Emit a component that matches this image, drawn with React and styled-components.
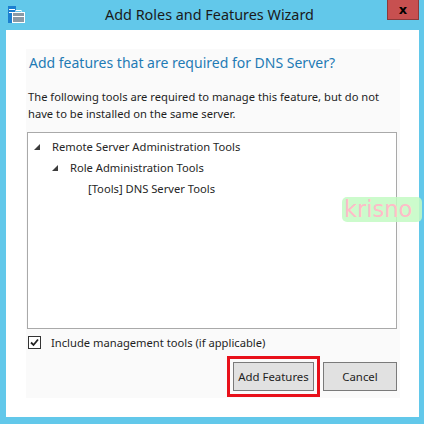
import React from "react";
import styled, { createGlobalStyle } from "styled-components";

const GlobalStyle = createGlobalStyle`
  html, body {
    margin: 0;
    padding: 0;
    background: #62c8ea;
  }
  * {
    box-sizing: border-box;
  }
`;

const Frame = styled.div`
  position: relative;
  width: 424px;
  height: 424px;
  background: #62c8ea;
  display: flex;
  flex-direction: column;
  padding: 0 5px 7px 6px;
  overflow: hidden;
  font-family: "Noto Sans", "Open Sans", sans-serif;
  color: #1e1e1e;
`;

const TitleBar = styled.div`
  height: 30px;
  margin: 0 0 0 -6px;
  display: grid;
  grid-template-columns: 1fr auto 1fr;
  align-items: start;
`;

const AppIcon = styled.svg`
  margin: 6px 0 0 8px;
  width: 17px;
  height: 17px;
`;

const Title = styled.div`
  font-size: 14.4px;
  line-height: 30px;
  color: #1a1a1a;
  white-space: nowrap;
`;

const CloseButton = styled.div`
  justify-self: end;
  width: 32px;
  height: 20px;
  background: #c75050;
  border: 1px solid #8b3a3a;
  border-top: none;
  display: flex;
  align-items: center;
  justify-content: center;
  font-family: "DejaVu Sans", sans-serif;
  font-weight: bold;
  font-size: 13px;
  color: #000;
`;

const Content = styled.div`
  flex: 1;
  background: #ffffff;
  padding: 19px 19px 19px 20px;
  display: flex;
`;

const Panel = styled.div`
  flex: 1;
  background: #fafafa;
  display: flex;
  flex-direction: column;
  padding: 4px 3px 7px 1px;
`;

const Heading = styled.h1`
  margin: 0 0 0 2px;
  font-weight: normal;
  font-size: 14px;
  line-height: 20px;
  color: #1f7bb5;
  white-space: nowrap;
`;

const Description = styled.p`
  margin: 15px 0 0 1px;
  font-size: 11.2px;
  line-height: 17px;
  color: #1e1e1e;
  white-space: nowrap;
`;

const TreeBox = styled.div`
  margin: 10px 0 0 0;
  height: 197px;
  background: #ffffff;
  border: 1px solid #a9a9a9;
  padding-top: 3px;
  display: flex;
  flex-direction: column;
`;

const TreeRow = styled.div`
  height: 21px;
  display: flex;
  align-items: center;
  padding-left: ${(p) => 6 + p.level * 18}px;
  font-size: 11.2px;
  color: #262626;
  white-space: nowrap;
`;

const Expander = styled.svg`
  width: 6px;
  height: 6px;
  margin-right: 12px;
  flex-shrink: 0;
`;

const Spacer = styled.span`
  width: 18px;
  flex-shrink: 0;
`;

const CheckRow = styled.label`
  margin-top: 6px;
  display: flex;
  align-items: center;
  gap: 10px;
  font-size: 11.2px;
  color: #1e1e1e;
  padding-left: 1px;
`;

const CheckBox = styled.span`
  width: 13px;
  height: 13px;
  border: 1px solid #333333;
  background: #ffffff;
  display: flex;
  align-items: center;
  justify-content: center;
`;

const ButtonRow = styled.div`
  margin-top: auto;
  display: flex;
  justify-content: flex-end;
  gap: 9px;
`;

const Button = styled.button`
  width: ${(p) => p.width}px;
  height: 29px;
  background: #e1e1e1;
  border: 1px solid #7a7a7a;
  font-family: "Noto Sans", "Open Sans", sans-serif;
  font-size: 11.4px;
  color: #1e1e1e;
  padding: 0;
  outline: ${(p) => (p.marked ? "3px solid #e8101a" : "none")};
  outline-offset: 3px;
`;

const Watermark = styled.div`
  position: absolute;
  left: 342px;
  top: 197px;
  width: 80px;
  height: 25px;
  background: rgba(195, 250, 195, 0.85);
  border-radius: 5px;
  color: #ffbcc8;
  font-family: "DejaVu Sans", sans-serif;
  font-size: 22.5px;
  line-height: 25px;
  padding-left: 2px;
  white-space: nowrap;
`;

const tree = [
  { level: 0, label: "Remote Server Administration Tools", open: true },
  { level: 1, label: "Role Administration Tools", open: true },
  { level: 2, label: "[Tools] DNS Server Tools", open: false },
];

export default function App() {
  return (
    <>
      <GlobalStyle />
      <Frame>
        <TitleBar>
          <AppIcon viewBox="0 0 17 17">
            <rect x="0" y="0" width="8" height="17" fill="#1b7fd0" />
            <rect x="1" y="3" width="6" height="1" fill="#ffffff" />
            <rect x="1" y="6" width="6" height="1" fill="#ffffff" />
            <rect x="4.5" y="6.5" width="12" height="10" fill="#8a9aa6" stroke="#ffffff" />
            <rect x="8" y="4.5" width="5" height="2" fill="none" stroke="#ffffff" />
            <rect x="5" y="10" width="11" height="1" fill="#ffffff" />
          </AppIcon>
          <Title>Add Roles and Features Wizard</Title>
          <CloseButton>x</CloseButton>
        </TitleBar>
        <Content>
          <Panel>
            <Heading>Add features that are required for DNS Server?</Heading>
            <Description>
              The following tools are required to manage this feature, but do not
              <br />
              have to be installed on the same server.
            </Description>
            <TreeBox>
              {tree.map((item) => (
                <TreeRow key={item.label} level={item.level}>
                  {item.open ? (
                    <Expander viewBox="0 0 6 6">
                      <polygon points="6,0 6,6 0,6" fill="#3c3c3c" />
                    </Expander>
                  ) : (
                    <Spacer />
                  )}
                  {item.label}
                </TreeRow>
              ))}
            </TreeBox>
            <CheckRow>
              <CheckBox>
                <svg width="9" height="9" viewBox="0 0 9 9">
                  <path d="M1 4.5 L3.5 7 L8 1.5" fill="none" stroke="#222" strokeWidth="1.8" />
                </svg>
              </CheckBox>
              Include management tools (if applicable)
            </CheckRow>
            <ButtonRow>
              <Button width={81} marked>
                Add Features
              </Button>
              <Button width={74}>Cancel</Button>
            </ButtonRow>
          </Panel>
        </Content>
        <Watermark>krisno</Watermark>
      </Frame>
    </>
  );
}
